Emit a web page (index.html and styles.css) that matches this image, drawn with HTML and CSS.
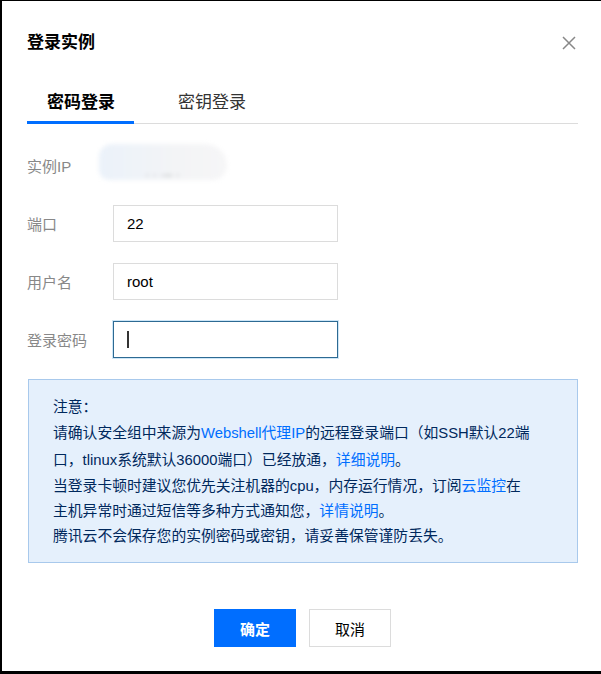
FILE: index.html
```html
<!DOCTYPE html>
<html lang="zh-CN">
<head>
  <meta charset="UTF-8" />
  <title>登录实例</title>
  <link rel="stylesheet" href="styles.css">
</head>
<body>
  <div class="dialog">
    <div class="dialog-head">
      <h2>登录实例</h2>
      <button class="close-btn" aria-label="关闭">
        <svg width="14" height="14" viewBox="0 0 14 14"><path d="M1 1 L13 13 M13 1 L1 13" stroke="#888" stroke-width="1.5" fill="none"/></svg>
      </button>
    </div>

    <div class="tabs">
      <div class="tab active">密码登录</div>
      <div class="tab">密钥登录</div>
    </div>

    <div class="form">
      <div class="row">
        <label>实例IP</label>
        <span class="ip-mask"><span class="ip-text">· · ·-- ·</span></span>
      </div>
      <div class="row">
        <label for="port">端口</label>
        <input type="text" id="port" value="22" />
      </div>
      <div class="row">
        <label for="user">用户名</label>
        <input type="text" id="user" value="root" />
      </div>
      <div class="row">
        <label for="pwd">登录密码</label>
        <div class="input focused"><span class="caret"></span></div>
      </div>
    </div>

    <div class="notice">
      <p>注意：</p>
      <p class="tall">请确认安全组中来源为<a href="#">Webshell代理IP</a>的远程登录端口（如SSH默认22端口，tlinux系统默认36000端口）已经放通，<a href="#">详细说明</a>。</p>
      <p>当登录卡顿时建议您优先关注机器的cpu，内存运行情况，订阅<a href="#">云监控</a>在<br>主机异常时通过短信等多种方式通知您，<a href="#">详情说明</a>。</p>
      <p>腾讯云不会保存您的实例密码或密钥，请妥善保管谨防丢失。</p>
    </div>

    <div class="actions">
      <button class="btn primary">确定</button>
      <button class="btn">取消</button>
    </div>
  </div>
</body>
</html>
```

FILE: styles.css
```css
* {
  box-sizing: border-box;
}

html, body {
  height: 100%;
}

body {
  margin: 0;
  background: #fff;
  border-left: 2px solid #000;
  border-top: 1px solid #000;
  border-bottom: 3px solid #000;
  font-family: "Liberation Sans", "Noto Sans CJK SC", sans-serif;
  color: #000;
}

.dialog {
  padding: 30px 23px 0 25px;
}

.dialog-head {
  display: flex;
  justify-content: space-between;
  align-items: center;
  height: 24px;
}

h2 {
  margin: 0;
  font-size: 17px;
  font-weight: bold;
  line-height: 24px;
}

.close-btn {
  background: none;
  border: none;
  padding: 0;
  margin-right: 2px;
  width: 14px;
  height: 14px;
  cursor: pointer;
  display: flex;
}

.tabs {
  display: flex;
  gap: 24px;
  margin-top: 36px;
  border-bottom: 1px solid #dcdcdc;
}

.tab {
  font-size: 17px;
  line-height: 24px;
  padding: 0 19px 6px 20px;
  color: #333;
  margin-bottom: -1px;
  border-bottom: 3px solid transparent;
}

.tab.active {
  font-weight: bold;
  color: #000;
  border-bottom-color: #006eff;
}

.form {
  margin-top: 23px;
  display: flex;
  flex-direction: column;
  gap: 21px;
}

.row {
  display: flex;
  align-items: center;
  height: 37px;
}

label {
  width: 86px;
  font-size: 15px;
  color: #888;
}

input, .input {
  width: 225px;
  height: 37px;
  border: 1px solid #dcdcdc;
  padding: 0 13px;
  font-family: inherit;
  font-size: 15px;
  color: #000;
  outline: none;
}

.input.focused {
  display: flex;
  align-items: center;
  border-color: #2d6a93;
  box-shadow: 0 0 0 1px #cde6f7;
}

.caret {
  width: 2px;
  height: 17px;
  background: #333;
}

.ip-mask {
  width: 128px;
  height: 36px;
  margin: -8px 0 0 -14px;
  border-radius: 18px 30px 20px 14px;
  background: linear-gradient(90deg, #ebf2fa, #f3f4f6 60%, #f6f6f7);
  filter: blur(2px);
  display: flex;
  align-items: flex-end;
  justify-content: center;
}

.ip-text {
  font-size: 9px;
  color: #555;
  letter-spacing: 1px;
}

.notice {
  margin: 21px 0 0 1px;
  background: #e5f0fc;
  border: 1px solid #a8c9ec;
  padding: 15px 24px 13px 24px;
  color: #00285c;
  font-size: 14.8px;
  line-height: 25px;
}

.notice p {
  margin: 0;
}

.notice p.tall {
  line-height: 27px;
}

.notice a {
  color: #006eff;
  text-decoration: none;
}

.actions {
  display: flex;
  justify-content: center;
  gap: 13px;
  margin-top: 46px;
}

.btn {
  width: 82px;
  height: 38px;
  font-family: inherit;
  font-size: 15px;
  background: #fff;
  border: 1px solid #dcdcdc;
  color: #000;
  cursor: pointer;
}

.btn.primary {
  background: #006eff;
  border-color: #006eff;
  color: #fff;
  font-weight: bold;
}
```
